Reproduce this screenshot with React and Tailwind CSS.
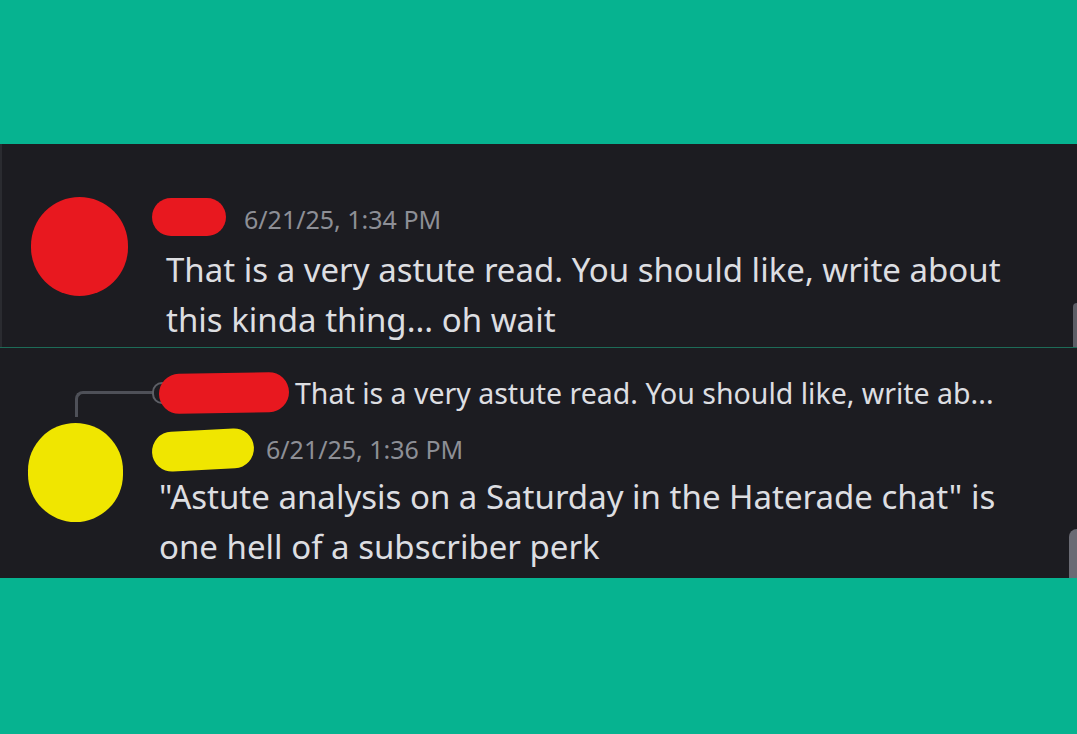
export default function App() {
  return (
    <div className="h-[734px] w-[1077px] bg-[#06b390] flex flex-col" style={{ fontFamily: '"Noto Sans", "Open Sans", sans-serif' }}>
      <div className="h-[144px] shrink-0" />

      {/* first message */}
      <div className="relative h-[203px] shrink-0 bg-[#1c1c21] border-l-2 border-[#2a2b30] flex items-start pl-[29px] pt-[53px]">
        <div className="w-[97px] h-[99px] rounded-full bg-[#e8181f] shrink-0" />
        <div className="ml-[38px] flex flex-col">
          <div className="h-[40px] flex items-center">
            <div className="-ml-[14px] w-[74px] h-[38px] rounded-full bg-[#e8181f]" />
            <span className="ml-[18px] mt-[6px] text-[25px] text-[#8d8f96]">6/21/25, 1:34 PM</span>
          </div>
          <p className="mt-[8px] text-[33px] leading-[50px] text-[#dddee1] w-[870px]">
            That is a very astute read. You should like, write about this kinda thing... oh wait
          </p>
        </div>
        <div className="absolute right-0 bottom-0 w-[4px] h-[44px] rounded-tl-[4px] bg-[#5d5e66]" />
      </div>

      <div className="h-px shrink-0 bg-[#1d6b57]" />

      {/* reply message */}
      <div className="relative h-[230px] shrink-0 bg-[#1c1c21] flex flex-col pt-[23px]">
        <div className="h-[44px] flex items-center pl-[75px]">
          <div className="self-start mt-[20px] w-[78px] h-[26px] border-l-[3px] border-t-[3px] rounded-tl-[8px] border-[#4e5058]" />
          <div className="w-[20px] h-[22px] rounded-full border-2 border-[#5d5f66] -ml-[1px]" />
          <div className="-ml-[13px] w-[130px] h-[40px] rounded-full bg-[#e8181f] -rotate-1" />
          <span className="ml-[6px] text-[28.5px] text-[#dddee1] whitespace-nowrap">
            That is a very astute read. You should like, write ab...
          </span>
        </div>
        <div className="mt-[8px] flex items-start pl-[28px]">
          <div className="w-[95px] h-[99px] rounded-full bg-[#f0e600] shrink-0" />
          <div className="ml-[36px] mt-[5px] flex flex-col">
            <div className="h-[44px] flex items-center">
              <div className="-ml-[7px] w-[102px] h-[40px] rounded-full bg-[#f0e600] -rotate-3" />
              <span className="ml-[12px] text-[25px] text-[#8d8f96]">6/21/25, 1:36 PM</span>
            </div>
            <p className="text-[33px] leading-[50px] text-[#dddee1] w-[880px]">
              "Astute analysis on a Saturday in the Haterade chat" is one hell of a subscriber perk
            </p>
          </div>
        </div>
        <div className="absolute right-0 bottom-0 w-[8px] h-[49px] rounded-tl-[8px] bg-[#6a6b74]" />
      </div>

      <div className="flex-1" />
    </div>
  )
}
